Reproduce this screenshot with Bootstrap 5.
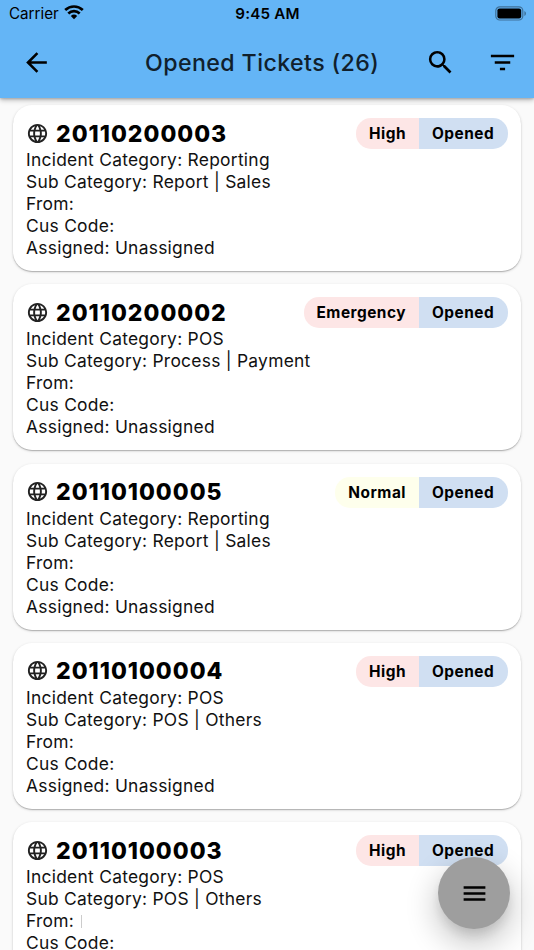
<!DOCTYPE html>
<html lang="en">
<head>
<meta charset="utf-8">
<meta name="viewport" content="width=device-width, initial-scale=1">
<title>Opened Tickets</title>
<link href="https://cdn.jsdelivr.net/npm/bootstrap@5.3.0/dist/css/bootstrap.min.css" rel="stylesheet">
<style>
body { font-family: Inter, "Liberation Sans", sans-serif; background: #fafafa; color: #000; height: 950px; overflow: hidden; }
svg { display: block; flex: none; }
.app-top { background: #64b5f6; height: 98px; z-index: 5; box-shadow: 0 2px 5px rgba(0,0,0,.28), 0 1px 2px rgba(0,0,0,.15); }
.status-row { height: 27px; padding: 0 8px 0 9px; font-size: 15.2px; line-height: 28px; }
.clock { font-weight: 600; letter-spacing: .2px; }
.wifi { margin-left: 5px; margin-top: -2px; }
.side { flex: 1 1 0; }
.tool-row { height: 71px; padding: 0 16px 0 21px; }
.page-title { font-size: 23.2px; font-weight: 500; line-height: 30px; letter-spacing: .4px; color: #10202c; margin: 0 0 0 93px; width: 240px; white-space: nowrap; }
.tools { gap: 31px; margin-top: -1px; }
.ticket-list { padding: 7px 13px 0; display: grid; row-gap: 13.3px; }
.ticket { height: 166px; border: 0; border-radius: 19px; padding: 13px 13px 0; background: #fff; box-shadow: 0 1px 1px rgba(0,0,0,.2), 0 1px 3px rgba(0,0,0,.16); }
.ticket-head { height: 31px; }
.ticket-head > svg { margin-top: -1px; }
.ticket-no { font-size: 23px; font-weight: 800; line-height: 31px; letter-spacing: 1px; margin-left: 7px; padding-top: 1px; }
.tag { height: 31px; line-height: 31px; font-size: 15.4px; font-weight: 700; padding: 0 13px; letter-spacing: .5px; }
.tag-left { border-radius: 15px 0 0 15px; }
.tag-right { border-radius: 0 15px 15px 0; background: #d0dff2; width: 89px; }
.tag-high { background: #fde6e6; }
.tag-normal { background: #feffec; }
.lines { font-size: 17.4px; line-height: 22px; letter-spacing: .27px; white-space: nowrap; color: #111; }
.tick { width: 1px; height: 13px; background: #ccc; margin-left: 7px; }
.menu-fab { position: fixed; left: 438px; top: 857px; width: 72px; height: 72px; background: #9e9e9e; border: 0; box-shadow: 0 8px 13px -3px rgba(0,0,0,.14), 0 13px 30px 4px rgba(0,0,0,.2); z-index: 6; }
</style>
</head>
<body>
<header class="app-top position-relative">
  <div class="status-row d-flex align-items-center">
    <div class="side d-flex align-items-center">
      <span class="carrier">Carrier</span>
      <svg class="wifi" width="20" height="15" viewBox="0 0 20 15" fill="none" stroke="#000" stroke-width="2.7"><path d="M1.2 5.1C6.3.3 13.7.3 18.8 5.1M4.3 8.4c3.3-3 8.1-3 11.4 0"/><path d="M6.8 10.9a4.8 4.8 0 0 1 6.4 0L10 14.2z" fill="#000" stroke="none"/></svg>
    </div>
    <span class="clock">9:45 AM</span>
    <div class="side d-flex justify-content-end">
      <svg width="31" height="15" viewBox="0 0 31 15"><rect x=".8" y=".8" width="27" height="13.2" rx="4" fill="none" stroke="#3f7199" stroke-width="1.2"/><rect x="2.4" y="2.4" width="23.8" height="10" rx="2.2"/><path d="M29.4 5v5q1.6-.8 1.6-2.5T29.4 5z" fill="#3f7199"/></svg>
    </div>
  </div>
  <div class="tool-row d-flex align-items-center">
    <svg width="31" height="31" viewBox="0 0 24 24"><path d="M20 11H7.83l5.59-5.59L12 4l-8 8 8 8 1.41-1.41L7.83 13H20v-2z"/></svg>
    <h1 class="page-title">Opened Tickets (26)</h1>
    <div class="d-flex ms-auto tools">
      <svg width="31" height="31" viewBox="0 0 24 24"><path d="M15.5 14h-.79l-.28-.27A6.47 6.47 0 0 0 16 9.5 6.5 6.5 0 1 0 9.5 16c1.61 0 3.09-.59 4.23-1.57l.27.28v.79l5 4.99L20.49 19l-4.99-5zm-6 0C7.01 14 5 11.99 5 9.5S7.01 5 9.5 5 14 7.01 14 9.5 11.99 14 9.5 14z"/></svg>
      <svg width="31" height="31" viewBox="0 0 24 24"><path d="M10 18h4v-2h-4v2zM3 6v2h18V6H3zm3 7h12v-2H6v2z"/></svg>
    </div>
  </div>
</header>
<svg width="0" height="0" class="position-absolute"><symbol id="globe" viewBox="0 0 24 24"><path d="M11.99 2C6.47 2 2 6.48 2 12s4.47 10 9.99 10C17.52 22 22 17.52 22 12S17.52 2 11.99 2zm6.93 6h-2.95c-.32-1.25-.78-2.45-1.38-3.56 1.84.63 3.37 1.91 4.33 3.56zM12 4.04c.83 1.2 1.48 2.53 1.91 3.96h-3.82c.43-1.43 1.08-2.76 1.91-3.96zM4.26 14C4.1 13.36 4 12.69 4 12s.1-1.36.26-2h3.38c-.08.66-.14 1.32-.14 2s.06 1.34.14 2H4.26zm.82 2h2.95c.32 1.25.78 2.45 1.38 3.56A7.987 7.987 0 0 1 5.08 16zm2.95-8H5.08a7.987 7.987 0 0 1 4.33-3.56A15.65 15.65 0 0 0 8.03 8zM12 19.96c-.83-1.2-1.48-2.53-1.91-3.96h3.82c-.43 1.43-1.08 2.76-1.91 3.96zM14.34 14H9.66c-.09-.66-.16-1.32-.16-2s.07-1.35.16-2h4.68c.09.65.16 1.32.16 2s-.07 1.34-.16 2zm.25 5.56c.6-1.11 1.06-2.31 1.38-3.56h2.95a8.03 8.03 0 0 1-4.33 3.56zM16.36 14c.08-.66.14-1.32.14-2s-.06-1.34-.14-2h3.38c.16.64.26 1.31.26 2s-.1 1.36-.26 2h-3.38z" fill="#222"/></symbol></svg>
<main class="ticket-list">
  <article class="card ticket">
    <div class="ticket-head d-flex align-items-center"><svg width="23" height="23"><use href="#globe"/></svg><span class="ticket-no">20110200003</span><span class="tag tag-left tag-high ms-auto">High</span><span class="tag tag-right">Opened</span></div>
    <div class="lines"><div>Incident Category: Reporting</div><div>Sub Category: Report | Sales</div><div>From:</div><div>Cus Code:</div><div>Assigned: Unassigned</div></div>
  </article>
  <article class="card ticket">
    <div class="ticket-head d-flex align-items-center"><svg width="23" height="23"><use href="#globe"/></svg><span class="ticket-no">20110200002</span><span class="tag tag-left tag-high ms-auto">Emergency</span><span class="tag tag-right">Opened</span></div>
    <div class="lines"><div>Incident Category: POS</div><div>Sub Category: Process | Payment</div><div>From:</div><div>Cus Code:</div><div>Assigned: Unassigned</div></div>
  </article>
  <article class="card ticket">
    <div class="ticket-head d-flex align-items-center"><svg width="23" height="23"><use href="#globe"/></svg><span class="ticket-no">20110100005</span><span class="tag tag-left tag-normal ms-auto">Normal</span><span class="tag tag-right">Opened</span></div>
    <div class="lines"><div>Incident Category: Reporting</div><div>Sub Category: Report | Sales</div><div>From:</div><div>Cus Code:</div><div>Assigned: Unassigned</div></div>
  </article>
  <article class="card ticket">
    <div class="ticket-head d-flex align-items-center"><svg width="23" height="23"><use href="#globe"/></svg><span class="ticket-no">20110100004</span><span class="tag tag-left tag-high ms-auto">High</span><span class="tag tag-right">Opened</span></div>
    <div class="lines"><div>Incident Category: POS</div><div>Sub Category: POS | Others</div><div>From:</div><div>Cus Code:</div><div>Assigned: Unassigned</div></div>
  </article>
  <article class="card ticket">
    <div class="ticket-head d-flex align-items-center"><svg width="23" height="23"><use href="#globe"/></svg><span class="ticket-no">20110100003</span><span class="tag tag-left tag-high ms-auto">High</span><span class="tag tag-right">Opened</span></div>
    <div class="lines"><div>Incident Category: POS</div><div>Sub Category: POS | Others</div><div class="d-flex align-items-center">From:<span class="tick"></span></div><div>Cus Code:</div></div>
  </article>
</main>
<button class="btn menu-fab rounded-circle d-flex align-items-center justify-content-center p-0" aria-label="Menu">
  <svg width="29" height="29" viewBox="0 0 24 24"><path d="M3 18h18v-2H3v2zm0-5h18v-2H3v2zm0-7v2h18V6H3z"/></svg>
</button>
<script src="https://cdn.jsdelivr.net/npm/bootstrap@5.3.0/dist/js/bootstrap.bundle.min.js"></script>
</body>
</html>
